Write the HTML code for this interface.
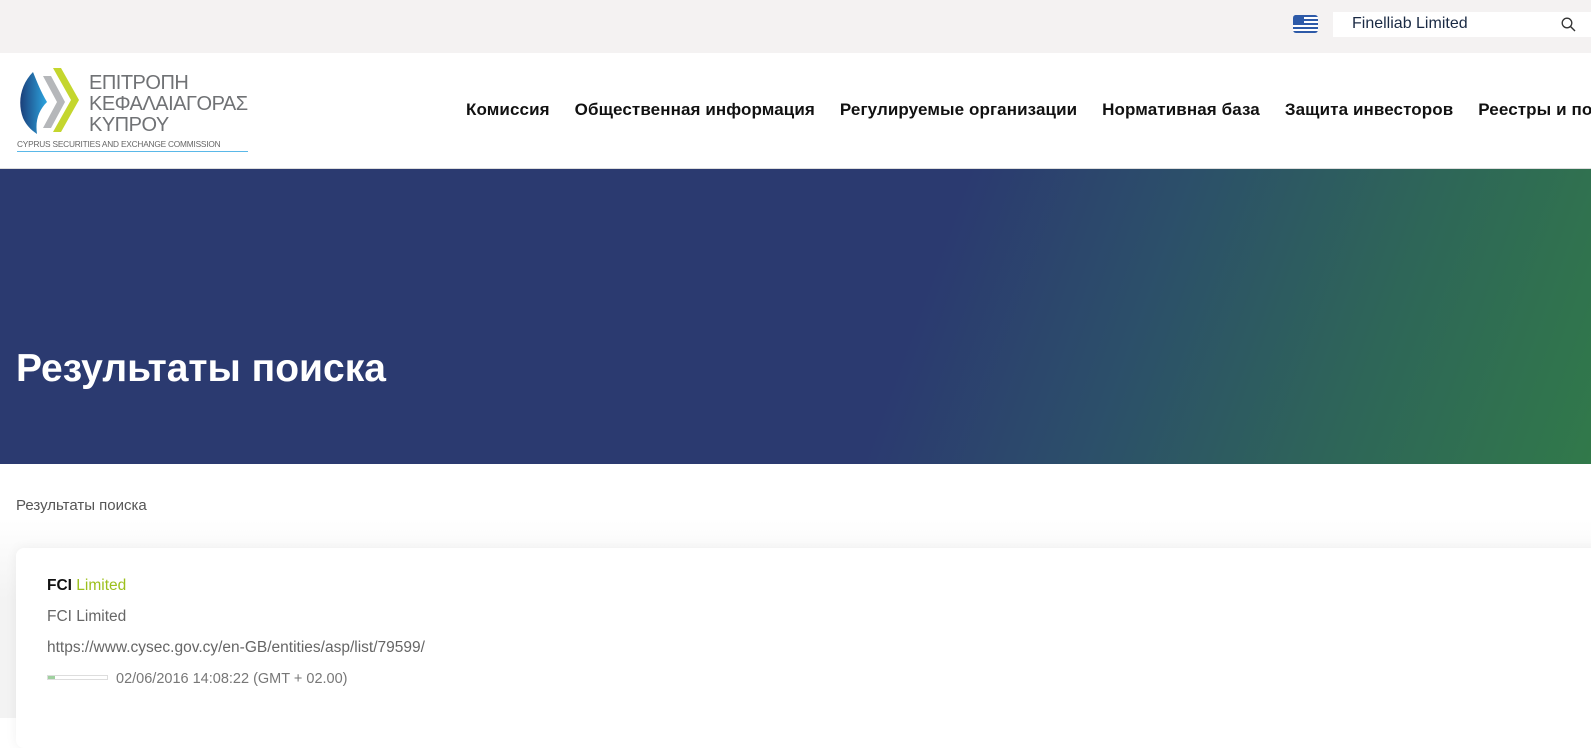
<!DOCTYPE html>
<html><head><meta charset="utf-8"><style>
*{margin:0;padding:0;box-sizing:border-box}
body{width:1591px;height:718px;overflow:hidden;background:#fff;font-family:"Liberation Sans",sans-serif;position:relative}
.top{position:absolute;left:0;top:0;width:1591px;height:53px;background:#f4f2f2}
.flag{position:absolute;left:1293px;top:15px;width:25px;height:18px;border-radius:3px;overflow:hidden;background:repeating-linear-gradient(#2d5aa8 0 2px,#fff 2px 4px)}
.flag:before{content:"";position:absolute;left:0;top:0;width:11px;height:10px;background:#2d5aa8}
.search{position:absolute;left:1333px;top:12px;width:258px;height:25px;background:#fff;font-size:16px;color:#1a2a44;padding:3px 0 0 19px}
.hdr{position:absolute;left:0;top:53px;width:1591px;height:116px;background:#fff;border-bottom:1px solid #ddd}
.nav{position:absolute;top:100px;left:466px;font-size:17px;font-weight:bold;color:#111;white-space:nowrap;letter-spacing:0.1px}
.nav span{margin-right:25px}
.ban{position:absolute;left:0;top:169px;width:1591px;height:295px;background:linear-gradient(110deg,#2b3a70 0%,#2b3a70 57%,#2c4f6a 70%,#2e6658 85%,#31794a 100%)}
.ban h1{position:absolute;left:16px;top:178px;color:#fff;font-size:39px;font-weight:bold}
.bc{position:absolute;left:16px;top:497px;font-size:15px;color:#555}
.bg{position:absolute;left:0;top:520px;width:1591px;height:198px;background:linear-gradient(180deg,#fff,#f3f3f3 40%)}
.card{position:absolute;left:16px;top:548px;width:1600px;height:200px;background:#fff;border-radius:8px;box-shadow:0 0 12px rgba(0,0,0,.06)}
.t{position:absolute;left:47px;font-size:15.5px;color:#666}
</style></head><body>
<div class="top"><div class="flag"></div><div class="search">Finelliab Limited
<svg style="position:absolute;right:15px;top:5px" width="15" height="15" viewBox="0 0 15 15"><circle cx="6" cy="6" r="4.8" fill="none" stroke="#333" stroke-width="1.3"/><path d="M9.5 9.5L14 14" stroke="#333" stroke-width="1.4"/></svg></div></div>
<div class="hdr">
<svg style="position:absolute;left:17px;top:15px" width="64" height="70" viewBox="0 0 64 70">
<defs><linearGradient id="g" x1="0" x2="1"><stop offset="0" stop-color="#1b3f7a"/><stop offset="1" stop-color="#2da6e0"/></linearGradient></defs>
<path d="M16 4 C4 16 0 34 6 50 C9 57 14 62 20 66 C18 52 22 42 30 34 C24 24 20 14 16 4Z" fill="url(#g)"/>
<path d="M26 8 L34 8 L48 34 L34 60 L26 60 L40 34Z" fill="#b5b7ba"/>
<path d="M36 0 L44 0 L62 32 L44 64 L36 64 L54 32Z" fill="#c4d62e"/>
</svg>
<div style="position:absolute;left:89px;top:20px;color:#707275;font-size:20px;line-height:21px;letter-spacing:-0.5px">ΕΠΙΤΡΟΠΗ<br>ΚΕΦΑΛΑΙΑΓΟΡΑΣ<br>ΚΥΠΡΟΥ</div>
<div style="position:absolute;left:17px;top:86px;width:231px;font-size:8.3px;color:#666;border-bottom:1.5px solid #5ab8e8;padding-bottom:2px;letter-spacing:-0.2px">CYPRUS SECURITIES AND EXCHANGE COMMISSION</div>
</div>
<div class="nav"><span>Комиссия</span><span>Общественная информация</span><span>Регулируемые организации</span><span>Нормативная база</span><span>Защита инвесторов</span><span>Реестры и портфели</span></div>
<div class="ban"><h1>Результаты поиска</h1></div>
<div class="bc">Результаты поиска</div>
<div class="bg"></div>
<div class="card"></div>
<div class="t" style="top:577px;color:#111;font-weight:bold">FCI <span style="color:#9cc01d;font-weight:normal">Limited</span></div>
<div class="t" style="top:608px">FCI Limited</div>
<div class="t" style="top:639px">https://www.cysec.gov.cy/en-GB/entities/asp/list/79599/</div>
<div style="position:absolute;left:47px;top:675px;width:61px;height:5px;border:1px solid #ddd"><div style="width:7px;height:3px;background:#9fd09f"></div></div>
<div class="t" style="top:671px;left:116px;font-size:14.5px;color:#777">02/06/2016 14:08:22 (GMT + 02.00)</div>
</body></html>
